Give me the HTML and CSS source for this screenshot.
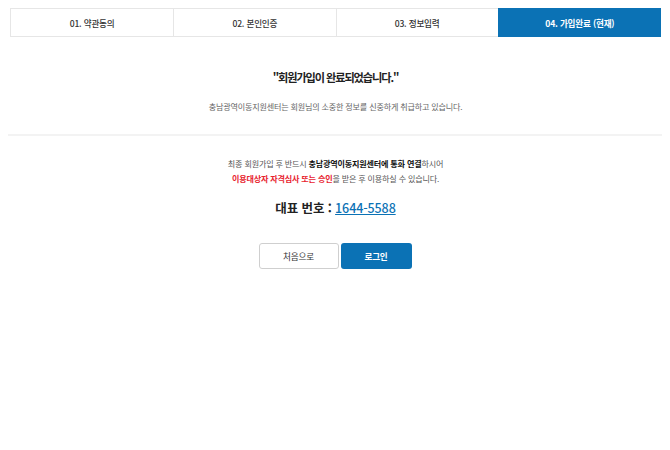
FILE: index.html
```html
<!DOCTYPE html>
<html lang="ko">
<head>
<meta charset="utf-8">
<title>회원가입 완료</title>
<link rel="stylesheet" href="styles.css">
</head>
<body>
<div class="wrap">
  <ul class="steps">
    <li class="step">01. 약관동의</li>
    <li class="step">02. 본인인증</li>
    <li class="step">03. 정보입력</li>
    <li class="step active">04. 가입완료 (현재)</li>
  </ul>

  <section class="done">
    <h2 class="done-title">"회원가입이 완료되었습니다."</h2>
    <p class="done-sub">충남광역이동지원센터는 회원님의 소중한 정보를 신중하게 취급하고 있습니다.</p>
  </section>

  <hr class="divider">

  <section class="notice">
    <p class="notice-text">최종 회원가입 후 반드시 <strong>충남광역이동지원센터에 통화 연결</strong>하시어<br><em class="red">이용대상자 자격심사 또는 승인</em>을 받은 후 이용하실 수 있습니다.</p>
    <p class="phone">대표 번호 : <a class="phone-num" href="#">1644-5588</a></p>
    <div class="btns">
      <a class="btn btn-line" href="#">처음으로</a>
      <a class="btn btn-blue" href="#">로그인</a>
    </div>
  </section>
</div>
</body>
</html>
```

FILE: styles.css
```css
* { box-sizing: border-box; }
html, body { margin: 0; padding: 0; background: #fff; }
body {
  font-family: "Noto Sans CJK KR", "Noto Sans", sans-serif;
  color: #333;
}
.wrap { padding: 8px 9px 0 10px; }

.steps {
  list-style: none;
  margin: 0;
  padding: 0;
  display: grid;
  grid-template-columns: repeat(4, 1fr);
  border: 1px solid #e6e6e6;
  height: 29px;
}
.step {
  display: flex;
  align-items: center;
  justify-content: center;
  font-size: 8.6px;
  font-weight: 500;
  color: #333;
  letter-spacing: -0.2px;
  border-left: 1px solid #e6e6e6;
}
.step:first-child { border-left: none; }
.step.active {
  background: #0b72b5;
  color: #fff;
  font-weight: 700;
  border-left-color: #0b72b5;
  margin: -1px -1px -1px 0;
}

.done { text-align: center; padding-top: 32px; }
.done-title {
  margin: 0;
  font-size: 11.2px;
  font-weight: 700;
  color: #222;
  letter-spacing: -1.1px;
  line-height: 16px;
}
.done-sub {
  margin: 16px 0 0;
  font-size: 8.1px;
  color: #666;
  letter-spacing: -0.2px;
  line-height: 12px;
}

.divider {
  border: none;
  height: 2px;
  background: #f3f3f3;
  margin: 21px -1px 0 -2px;
}

.notice { text-align: center; padding-top: 20px; }
.notice-text {
  margin: 0;
  font-size: 8.1px;
  line-height: 15px;
  color: #555;
  letter-spacing: -0.2px;
}
.notice-text strong { color: #111; font-weight: 700; }
.notice-text .red { color: #e8242f; font-style: normal; font-weight: 700; }

.phone {
  margin: 14px 0 0;
  font-size: 12.5px;
  font-weight: 700;
  color: #222;
  letter-spacing: -0.1px;
  line-height: 16px;
}
.phone-num {
  color: #0b72b5;
  font-weight: 500;
  text-decoration: underline;
  text-underline-offset: 1px;
}

.btns {
  display: flex;
  justify-content: center;
  gap: 2px;
  margin-top: 27px;
  padding-right: 1px;
}
.btn {
  display: flex;
  align-items: center;
  justify-content: center;
  height: 26px;
  border-radius: 3px;
  font-size: 8.6px;
  text-decoration: none;
  letter-spacing: -0.2px;
}
.btn-line {
  width: 80px;
  border: 1px solid #cfcfcf;
  color: #333;
  background: #fff;
}
.btn-blue {
  width: 71px;
  background: #0b72b5;
  color: #fff;
  font-weight: 700;
}
```
